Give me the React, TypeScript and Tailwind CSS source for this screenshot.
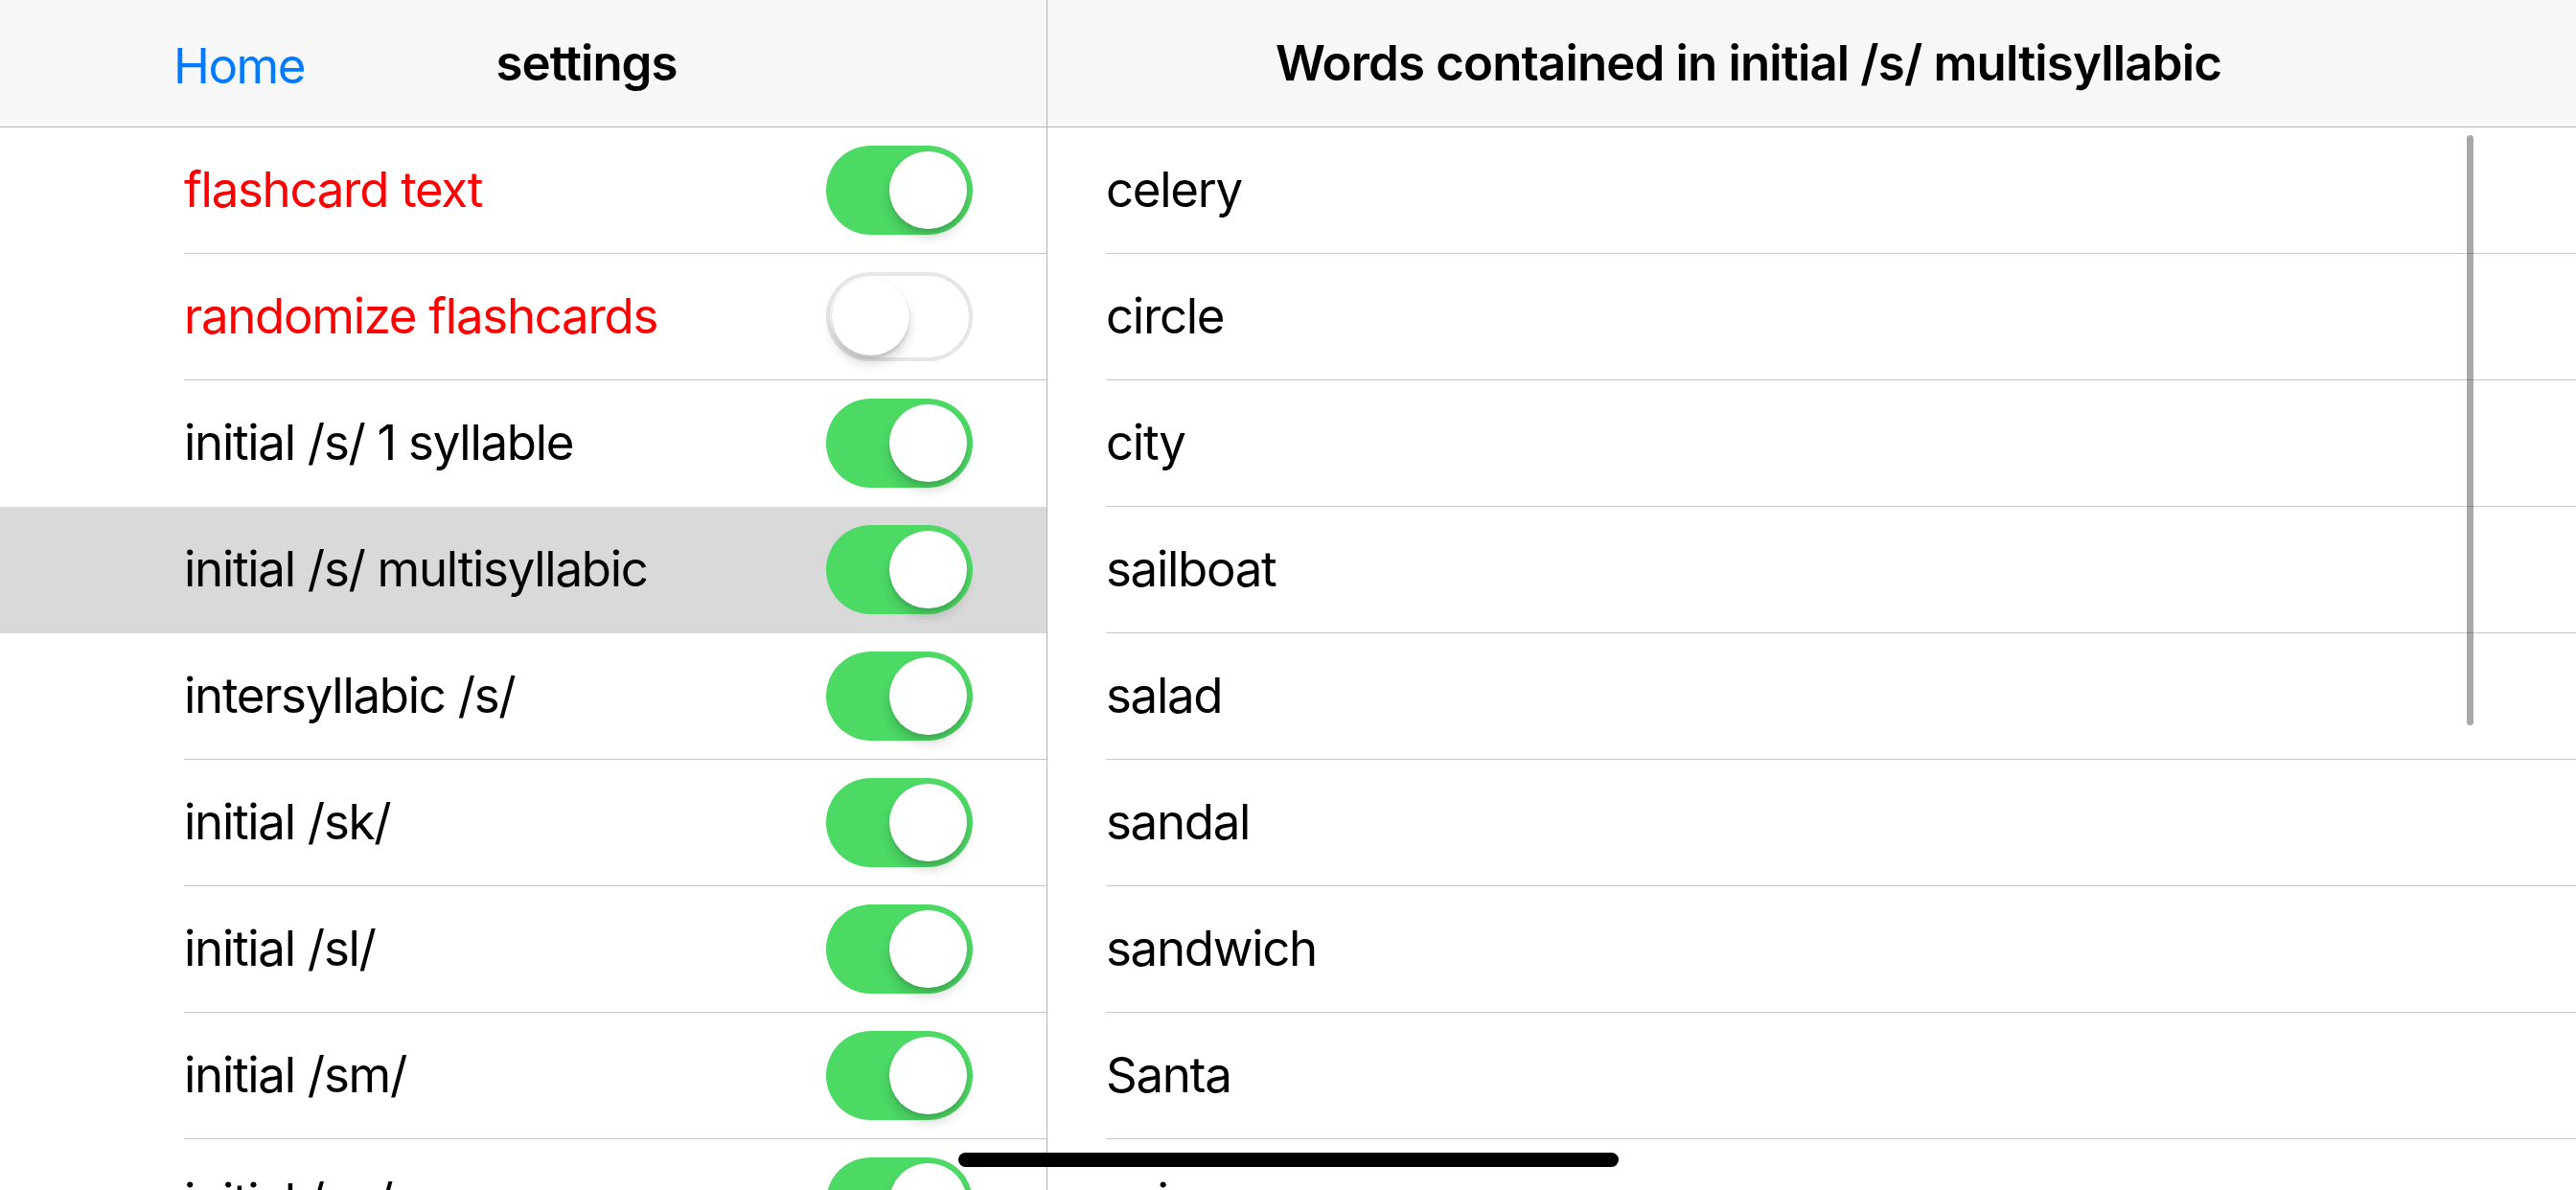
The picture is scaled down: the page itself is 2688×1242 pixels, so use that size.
import React from "react";

type Setting = { label: string; on: boolean; red?: boolean; selected?: boolean };

const settings: Setting[] = [
  { label: "flashcard text", on: true, red: true },
  { label: "randomize flashcards", on: false, red: true },
  { label: "initial /s/ 1 syllable", on: true },
  { label: "initial /s/ multisyllabic", on: true, selected: true },
  { label: "intersyllabic /s/", on: true },
  { label: "initial /sk/", on: true },
  { label: "initial /sl/", on: true },
  { label: "initial /sm/", on: true },
  { label: "initial /sn/", on: true },
];

const words = ["celery", "circle", "city", "sailboat", "salad", "sandal", "sandwich", "Santa", "scissors"];

function Toggle({ on }: { on: boolean }) {
  if (on) {
    return (
      <div className="relative w-[153px] h-[93px] rounded-full bg-[#4cd964] shrink-0">
        <div className="absolute right-[6px] top-[6px] w-[81px] h-[81px] rounded-full bg-white shadow-[0_9px_12px_rgba(0,0,0,0.15),0_3px_3px_rgba(0,0,0,0.08)]" />
      </div>
    );
  }
  return (
    <div className="relative w-[153px] h-[93px] rounded-full bg-white border-[4px] border-[#e6e6e6] shrink-0">
      <div className="absolute left-[2px] top-[2px] w-[81px] h-[81px] rounded-full bg-white shadow-[0_9px_12px_rgba(0,0,0,0.15),0_3px_3px_rgba(0,0,0,0.12),0_0_1px_rgba(0,0,0,0.15)]" />
    </div>
  );
}

export default function App() {
  return (
    <div
      className="relative w-[2688px] h-[1242px] overflow-hidden bg-white flex text-black"
      style={{ fontFamily: "Inter, 'Noto Sans', sans-serif" }}
    >
      {/* Left master panel */}
      <div className="w-[1093px] h-full border-r border-[#b4b4b4] flex flex-col shrink-0">
        <div className="h-[133px] bg-[#f7f7f7] border-b border-[#b4b4b4] shrink-0">
          <div className="ml-[132px] w-[960px] h-full grid grid-cols-[1fr_auto_1fr] items-center">
            <div className="pl-[49px] pt-[6px] text-[51px] text-[#007aff] tracking-[-1.5px]">Home</div>
            <div className="text-[51px] font-semibold tracking-[-1px]">settings</div>
            <div />
          </div>
        </div>
        <div className="flex flex-col">
          {settings.map((s, i) => {
            const hideSep = s.selected || (settings[i + 1] && settings[i + 1].selected);
            return (
              <div key={s.label} className={"h-[132px] shrink-0 " + (s.selected ? "bg-[#d9d9d9]" : "")}>
                <div
                  className={
                    "ml-[192px] h-full flex items-center justify-between border-b " +
                    (hideSep ? "border-transparent" : "border-[#c8c7cc]")
                  }
                >
                  <span className={"text-[51px] tracking-[-1.3px] " + (s.red ? "text-[#ff0000]" : "text-black")}>
                    {s.label}
                  </span>
                  <div className="mr-[77px]">
                    <Toggle on={s.on} />
                  </div>
                </div>
              </div>
            );
          })}
        </div>
      </div>

      {/* Right detail panel */}
      <div className="flex-1 h-full flex flex-col">
        <div className="h-[133px] bg-[#f7f7f7] border-b border-[#b4b4b4] shrink-0 flex items-center">
          <div className="w-[1463px] text-center text-[51px] font-semibold tracking-[-0.85px]">
            Words contained in initial /s/ multisyllabic
          </div>
        </div>
        <div className="flex flex-col">
          {words.map((w) => (
            <div key={w} className="h-[132px] shrink-0">
              <div className="ml-[61px] h-full flex items-center border-b border-[#c8c7cc]">
                <span className="text-[51px] tracking-[-1.3px]">{w}</span>
              </div>
            </div>
          ))}
        </div>
      </div>

      {/* Scroll indicator */}
      <div className="absolute left-[2574px] top-[141px] w-[7px] h-[616px] rounded-full bg-[rgba(0,0,0,0.34)]" />

      {/* Home indicator */}
      <div className="absolute left-[1000px] top-[1203px] w-[689px] h-[15px] rounded-full bg-black" />
    </div>
  );
}
